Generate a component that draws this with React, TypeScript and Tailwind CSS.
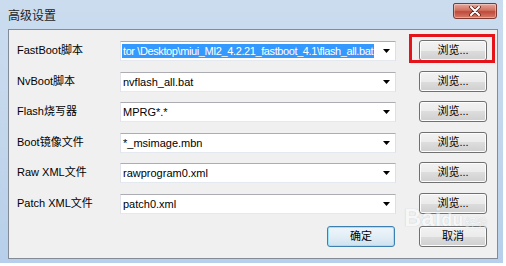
import type { ReactNode } from 'react'

const rows = [
  { label: 'FastBoot脚本', value: 'tor \\Desktop\\miui_MI2_4.2.21_fastboot_4.1\\flash_all.bat', selected: true, gap: 'mt-0' },
  { label: 'NvBoot脚本', value: 'nvflash_all.bat', selected: false, gap: 'mt-[10px]' },
  { label: 'Flash烧写器', value: 'MPRG*.*', selected: false, gap: 'mt-[9px]' },
  { label: 'Boot镜像文件', value: '*_msimage.mbn', selected: false, gap: 'mt-[10px]' },
  { label: 'Raw XML文件', value: 'rawprogram0.xml', selected: false, gap: 'mt-[9px]' },
  { label: 'Patch XML文件', value: 'patch0.xml', selected: false, gap: 'mt-[10px]' },
]

const WinButton = ({ children, isDefault }: { children: ReactNode; isDefault?: boolean }) => (
  <button
    className={
      isDefault
        ? 'w-[68px] h-[21px] rounded-[3px] border border-[#3c7fb1] bg-gradient-to-b from-[#eef5fa] via-[#e2eef6] to-[#cfe2ef] shadow-[inset_0_0_0_1px_#9ee1fb] text-[11px] text-black flex items-center justify-center'
        : 'w-[68px] h-[21px] rounded-[3px] border border-[#707070] bg-[linear-gradient(#f2f2f2,#ebebeb_50%,#dddddd_50%,#cfcfcf)] shadow-[inset_0_0_0_1px_#fcfcfc] text-[11px] text-black flex items-center justify-center'
    }
  >
    {children}
  </button>
)

const Combo = ({ value, selected }: { value: string; selected: boolean }) => (
  <div className="w-[276px] h-[20px] bg-white border border-t-[#abadb3] border-l-[#e2e3ea] border-r-[#dbdfe6] border-b-[#e3e9ef] flex items-center">
    <div className="flex-1 flex pl-[1px]">
      <span
        className={
          selected
            ? 'whitespace-nowrap bg-[#3399ff] text-white leading-[14px] px-[1px] tracking-[-0.4px]'
            : 'whitespace-nowrap text-black leading-[14px] px-[1px]'
        }
      >
        {value}
      </span>
    </div>
    <div className="w-[17px] h-full flex items-center justify-center">
      <svg width="7" height="4" viewBox="0 0 7 4">
        <polygon points="0,0 7,0 3.5,4" fill="#000" />
      </svg>
    </div>
  </div>
)

export default function App() {
  return (
    <div className="w-[506px] h-[266px] bg-white relative overflow-hidden font-['Liberation_Sans','Noto_Sans_CJK_SC',sans-serif] text-[11px] text-black">
      <div className="w-[503px] h-[263px] flex flex-col pl-[8px] pr-[5px] pb-[4px] bg-gradient-to-b from-[#cbdcef] via-[#c3d7ec] to-[#b7cfea]">
        {/* title bar */}
        <div className="h-[29px] flex justify-between shrink-0">
          <div className="pt-[7px] text-[12px] leading-[16px] text-[#1e1e1e] font-['Noto_Sans_CJK_SC',sans-serif]">高级设置</div>
          <div className="mt-[3px] mr-[1px] w-[44px] h-[16px] rounded-b-[3px] rounded-t-[2px] border border-[#7d3a33] bg-[linear-gradient(#e8a899,#d0705f_45%,#bf4a3a_55%,#d87c6a)] shadow-[inset_0_0_0_1px_rgba(255,255,255,0.35)] flex items-center justify-center">
            <svg width="12" height="10" viewBox="0 0 12 10">
              <path d="M2 1 L10 9 M10 1 L2 9" stroke="#5a2018" strokeWidth="3.6" strokeLinecap="round" />
              <path d="M2 1 L10 9 M10 1 L2 9" stroke="#ffffff" strokeWidth="2" strokeLinecap="round" />
            </svg>
          </div>
        </div>

        {/* client area */}
        <div className="flex-1 bg-[#f0f0f0] border border-[#838b97] pt-[10px] flex flex-col">
          {rows.map((r) => (
            <div key={r.label} className={`${r.gap} h-[21px] flex items-center`}>
              <div className="w-[111px] pl-[8px] whitespace-nowrap">{r.label}</div>
              <Combo value={r.value} selected={r.selected} />
              <div className="ml-[23px]">
                <WinButton>浏览...</WinButton>
              </div>
            </div>
          ))}
          <div className="mt-[12px] flex justify-end gap-[24px] pr-[10px]">
            <WinButton isDefault>确定</WinButton>
            <WinButton>取消</WinButton>
          </div>
        </div>
      </div>

      {/* red annotation box */}
      <div className="absolute left-[409px] top-[34px] w-[86px] h-[29px] border-[3px] border-[#e5141b]" />

      {/* baidu watermark */}
      <div className="absolute left-[404px] top-[206px] flex items-end opacity-50 pointer-events-none">
        <span className="text-[24px] leading-[24px] font-bold text-white [text-shadow:0_0_1px_#7f98b3]">Bai</span>
        <span className="text-[18px] leading-[20px] font-bold text-white [text-shadow:0_0_1px_#7f98b3]">du</span>
        <span className="ml-[2px] text-[11px] leading-[14px] text-white [text-shadow:0_0_1px_#7f98b3]">经验</span>
      </div>
    </div>
  )
}
